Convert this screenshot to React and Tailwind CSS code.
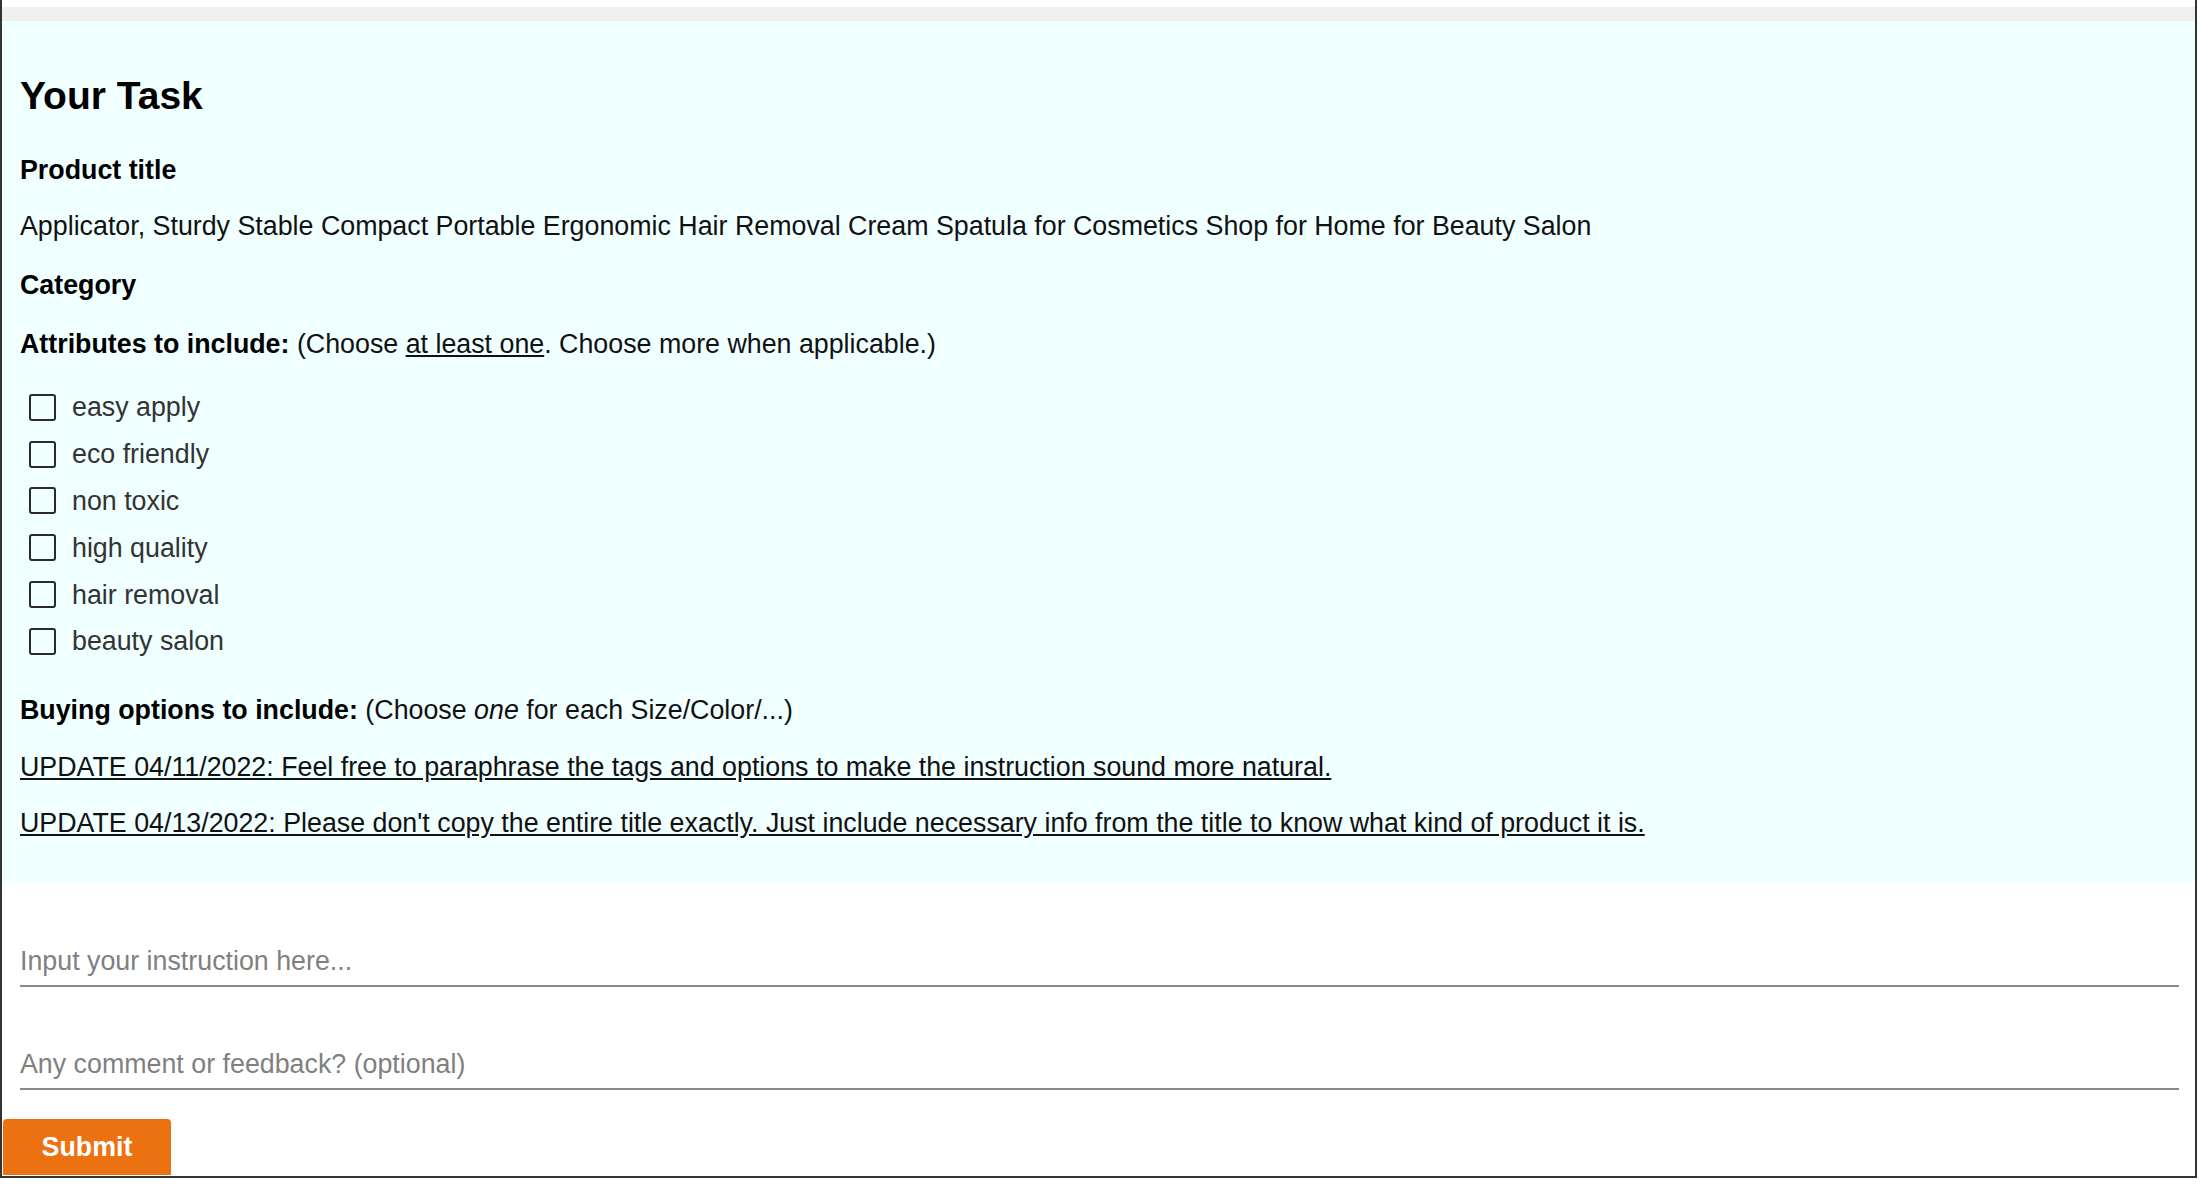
import React from 'react';

const attributes = ['easy apply', 'eco friendly', 'non toxic', 'high quality', 'hair removal', 'beauty salon'];

function App() {
  return (
    <div className="w-[2197px] h-[1178px] bg-white border-x-2 border-b-2 border-[#333] text-black" style={{ fontFamily: '"Liberation Sans", Arial, sans-serif' }}>
      <div className="h-[7px] bg-white" />
      <div className="h-[14px] bg-[#f0f0f0]" />

      <div className="bg-[#f0ffff] pl-[18px] pr-4 pt-[53px] pb-[44px] text-[26.8px] leading-[30px]">
        <h2 className="text-[39px] leading-[44px] font-bold">Your Task</h2>
        <p className="mt-[37px] font-bold">Product title</p>
        <p className="mt-[26px] text-[#111]">
          Applicator, Sturdy Stable Compact Portable Ergonomic Hair Removal Cream Spatula for Cosmetics Shop for Home for Beauty Salon
        </p>
        <p className="mt-[29px] font-bold">Category</p>
        <p className="mt-[29px] text-[#111]">
          <span className="font-bold text-black">Attributes to include:</span> (Choose <span className="underline">at least one</span>. Choose more when applicable.)
        </p>

        <div className="mt-[25px]">
          {attributes.map((a) => (
            <label key={a} className="flex items-center h-[46.8px] pl-[9px] gap-4 text-[#333]">
              <span className="w-[27px] h-[27px] border-[2.5px] border-[#2a2a2a] rounded-[3px] bg-transparent" />
              <span>{a}</span>
            </label>
          ))}
        </div>

        <p className="mt-[30px] text-[#111]">
          <span className="font-bold text-black">Buying options to include:</span> (Choose <em>one</em> for each Size/Color/...)
        </p>
        <p className="mt-[27px] underline text-[#111]">
          UPDATE 04/11/2022: Feel free to paraphrase the tags and options to make the instruction sound more natural.
        </p>
        <p className="mt-[26px] underline text-[#111]">
          UPDATE 04/13/2022: Please don't copy the entire title exactly. Just include necessary info from the title to know what kind of product it is.
        </p>
      </div>

      <div className="pl-[18px] pr-4 pt-[57px]">
        <input
          type="text"
          placeholder="Input your instruction here..."
          className="block w-[2159px] h-[48px] border-b-2 border-[#8a8a8a] text-[26.8px] outline-none placeholder:text-[#808080] bg-transparent"
        />
        <input
          type="text"
          placeholder="Any comment or feedback? (optional)"
          className="block mt-[55px] w-[2159px] h-[48px] border-b-2 border-[#8a8a8a] text-[26.8px] outline-none placeholder:text-[#808080] bg-transparent"
        />
      </div>

      <button className="mt-[29px] ml-px w-[168px] h-[56px] bg-[#ec7211] text-white font-bold text-[26.8px] rounded-t-[4px]">
        Submit
      </button>
    </div>
  );
}

export default App;
